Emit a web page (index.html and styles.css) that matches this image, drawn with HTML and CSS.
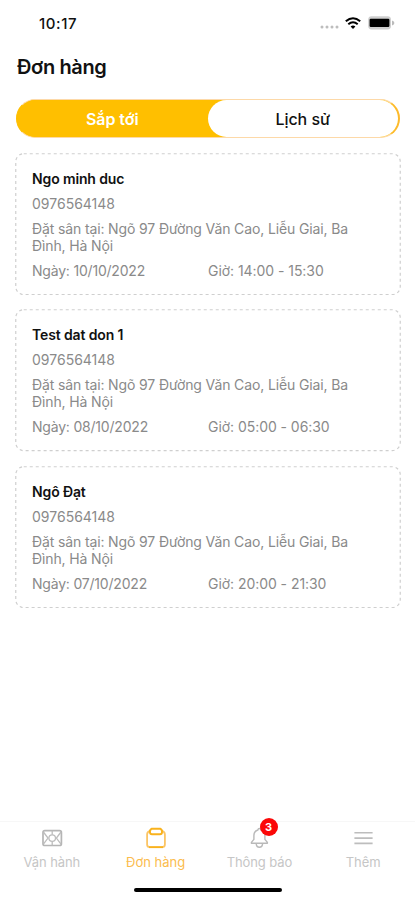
FILE: index.html
```html
<!DOCTYPE html>
<html lang="vi">
<head>
    <meta charset="UTF-8">
    <meta name="viewport" content="width=device-width, initial-scale=1.0">
    <title>Đơn hàng</title>
    <link rel="stylesheet" href="styles.css">
</head>
<body>
    <!-- Status bar -->
    <div class="status-bar">
        <span class="time">10:17</span>
        <div class="status-icons">
            <svg class="signal" width="19" height="4" viewBox="0 0 19 4" fill="#bdbdbd">
                <circle cx="2" cy="2" r="1.5"/>
                <circle cx="7" cy="2" r="1.5"/>
                <circle cx="12" cy="2" r="1.5"/>
                <circle cx="17" cy="2" r="1.5"/>
            </svg>
            <svg class="wifi" width="16" height="12" viewBox="0 0 16 12" fill="none" stroke="#000" stroke-width="2">
                <path d="M0.8 4.3 Q8 -1.9 15.2 4.3"/>
                <path d="M3.3 7.2 Q8 3.2 12.7 7.2"/>
                <path d="M8 12 L5.6 9.6 Q8 7.6 10.4 9.6 Z" fill="#000" stroke="none"/>
            </svg>
            <svg class="battery" width="27" height="14" viewBox="0 0 27 14">
                <rect x="0.2" y="0.2" width="22.8" height="13.3" rx="3.4" fill="#cfcfcf"/>
                <path d="M24 4.4 Q26.4 5.2 26.4 6.9 Q26.4 8.6 24 9.4 Z" fill="#bbb"/>
                <rect x="1.6" y="2.8" width="19.8" height="8.2" rx="1.2" fill="#000"/>
            </svg>
        </div>
    </div>

    <h1 class="title">Đơn hàng</h1>

    <!-- Tabs -->
    <div class="tabs">
        <button class="tab active">Sắp tới</button>
        <button class="tab">Lịch sử</button>
    </div>

    <!-- Orders -->
    <div class="orders">
        <div class="order">
            <svg class="outline"><rect x="0.75" y="0.75" rx="8"/></svg>
            <h2 class="name">Ngo minh duc</h2>
            <p class="phone">0976564148</p>
            <p class="address">Đặt sân tại: Ngõ 97 Đường Văn Cao, Liễu Giai, Ba Đình, Hà Nội</p>
            <div class="when">
                <span>Ngày: 10/10/2022</span>
                <span class="hours">Giờ: 14:00 - 15:30</span>
            </div>
        </div>
        <div class="order">
            <svg class="outline"><rect x="0.75" y="0.75" rx="8"/></svg>
            <h2 class="name">Test dat don 1</h2>
            <p class="phone">0976564148</p>
            <p class="address">Đặt sân tại: Ngõ 97 Đường Văn Cao, Liễu Giai, Ba Đình, Hà Nội</p>
            <div class="when">
                <span>Ngày: 08/10/2022</span>
                <span class="hours">Giờ: 05:00 - 06:30</span>
            </div>
        </div>
        <div class="order">
            <svg class="outline"><rect x="0.75" y="0.75" rx="8"/></svg>
            <h2 class="name">Ngô Đạt</h2>
            <p class="phone">0976564148</p>
            <p class="address">Đặt sân tại: Ngõ 97 Đường Văn Cao, Liễu Giai, Ba Đình, Hà Nội</p>
            <div class="when">
                <span>Ngày: 07/10/2022</span>
                <span class="hours">Giờ: 20:00 - 21:30</span>
            </div>
        </div>
    </div>

    <!-- Bottom navigation -->
    <nav class="bottom-nav">
        <a class="nav-item">
            <svg width="22" height="22" viewBox="0 0 22 22" fill="none" stroke="#bdbdbd" stroke-width="1.3">
                <rect x="2" y="3.7" width="18.4" height="14.8" rx="1.8" stroke="#b5b5b5" stroke-width="1.7"/>
                <path d="M11.2 3.7 V7.8 M11.2 14.4 V18.5"/>
                <circle cx="11.2" cy="11.1" r="3.3"/>
                <path d="M2.4 5 L7 11.1 L2.4 17.2 M20 5 L15.4 11.1 L20 17.2"/>
            </svg>
            <span>Vận hành</span>
        </a>
        <a class="nav-item active">
            <svg width="22" height="22" viewBox="0 0 22 22" fill="none">
                <path d="M5.4 4.2 Q2.1 4.4 2.1 7.4 V17.6 Q2.1 20.2 4.8 20.2 H17.2 Q19.9 20.2 19.9 17.6 V7.4 Q19.9 4.4 16.6 4.2" stroke="#fbc566" stroke-width="1.8"/>
                <path d="M4 20.2 H18" stroke="#f9b21c" stroke-width="1.8"/>
                <path d="M6.6 1.7 H15.4 L17 3.5 V5.3 Q17 7.3 15 7.3 H7 Q5 7.3 5 5.3 V3.5 Z" stroke="#f9b21c" stroke-width="1.9" stroke-linejoin="round"/>
            </svg>
            <span>Đơn hàng</span>
        </a>
        <a class="nav-item">
            <svg width="22" height="22" viewBox="0 0 22 22" fill="none" stroke="#b9b9b9" stroke-width="1.4" stroke-linejoin="round">
                <path d="M9.9 3 Q9.9 1.5 11.4 1.5 Q12.9 1.5 12.9 3 Q16.9 4.2 16.9 8.6 V12.4 L19.4 15.4 V16.2 H3.4 V15.4 L5.9 12.4 V8.6 Q5.9 4.2 9.9 3 Z"/>
                <path d="M8.2 16.6 Q8.4 20.2 11.4 20.2 Q14.4 20.2 14.6 16.6"/>
            </svg>
            <b class="badge">3</b>
            <span>Thông báo</span>
        </a>
        <a class="nav-item">
            <svg width="22" height="22" viewBox="0 0 22 22" stroke="#bdbdbd" stroke-width="1.6">
                <path d="M2.4 5.8 H20.6 M2.4 11.1 H20.6 M2.4 16.4 H20.6"/>
            </svg>
            <span>Thêm</span>
        </a>
    </nav>
    <div class="home-indicator"></div>
</body>
</html>
```
FILE: styles.css
```css
* {
    box-sizing: border-box;
}
body {
    margin: 0;
    width: 415px;
    height: 900px;
    overflow: hidden;
    display: flex;
    flex-direction: column;
    background-color: #fff;
    color: #111;
    font-family: Inter, "Liberation Sans", sans-serif;
}
.status-bar {
    height: 46px;
    padding: 0 20px 0 39px;
    display: flex;
    align-items: center;
    justify-content: space-between;
}
.time {
    font-size: 15px;
    font-weight: 500;
    letter-spacing: 0.6px;
}
.status-icons {
    display: flex;
    align-items: center;
}
.signal {
    margin: 8px 6px 0 0;
}
.wifi {
    margin-right: 7px;
}
.title {
    margin: 7px 0 0 17px;
    height: 28px;
    line-height: 28px;
    font-size: 20px;
    font-weight: 600;
    letter-spacing: -0.35px;
    white-space: nowrap;
}
.tabs {
    display: flex;
    margin: 18px 15px 0 16px;
    height: 39px;
    flex-shrink: 0;
    border: 1px solid #fdd9a8;
    border-right: 2px solid #fdb92c;
    border-left-color: #ffbf00;
    border-radius: 20px;
    background-color: #ffbf00;
}
.tab {
    flex: 1;
    padding: 0;
    border: none;
    border-radius: 19px;
    background-color: #fff;
    color: #111;
    font-family: inherit;
    font-size: 16px;
    font-weight: 500;
    letter-spacing: -0.05px;
}
.tab.active {
    background-color: #ffbf00;
    color: #fff;
    font-weight: 600;
}
.orders {
    display: flex;
    flex-direction: column;
    gap: 14px;
    padding: 15px 14px 0 15px;
}
.order {
    position: relative;
    height: 142.4px;
    padding: 16px 40px 0 17px;
    color: #8a8a8a;
    font-size: 14px;
    letter-spacing: -0.13px;
}
/* Dashed border around the card */
.outline {
    position: absolute;
    top: 0;
    left: 0;
    width: 100%;
    height: 100%;
}
.outline rect {
    width: calc(100% - 1.5px);
    height: calc(100% - 1.5px);
    fill: none;
    stroke: #cfcfcf;
    stroke-width: 1.2;
    stroke-dasharray: 3 3;
}
.name {
    margin: 0 0 5px;
    line-height: 20px;
    font-size: 14px;
    font-weight: 600;
    color: #111;
}
.phone {
    margin: 0 0 6px;
    line-height: 20px;
    letter-spacing: 0;
}
.address {
    margin: 0 0 7px;
    line-height: 17px;
}
.when {
    display: grid;
    grid-template-columns: 176px 1fr;
    line-height: 20px;
    letter-spacing: -0.2px;
    white-space: nowrap;
}
.hours {
    letter-spacing: -0.05px;
}
.bottom-nav {
    display: flex;
    margin-top: auto;
    height: 67px;
    border-top: 1px solid #f7f7f7;
}
.nav-item {
    position: relative;
    flex: 1;
    display: flex;
    flex-direction: column;
    align-items: center;
    padding-top: 5px;
    color: #c6c6c6;
    font-size: 13px;
    letter-spacing: -0.1px;
    line-height: 20px;
}
.nav-item span {
    margin-top: 3px;
}
.nav-item.active {
    color: #fbbc4d;
    letter-spacing: 0;
}
.badge {
    position: absolute;
    top: -4px;
    left: 52px;
    width: 18px;
    height: 18px;
    border-radius: 50%;
    background-color: #fb0808;
    color: #fff;
    font-size: 11px;
    line-height: 18px;
    text-align: center;
}
.home-indicator {
    width: 148px;
    height: 4px;
    margin: 0 auto 8px;
    flex-shrink: 0;
    border-radius: 2px;
    background-color: #000;
}
```
